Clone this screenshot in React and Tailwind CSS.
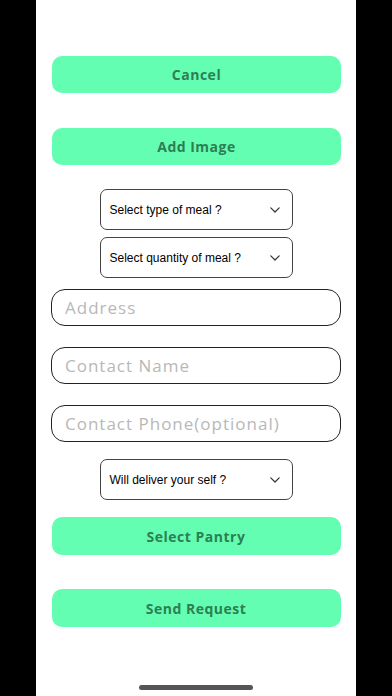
const Chevron = () => (
  <svg width="10" height="6" viewBox="0 0 10 6" fill="none">
    <path d="M0.8 0.8l4.2 4.2 4.2-4.2" stroke="#333" strokeWidth="1.2" strokeLinecap="round" strokeLinejoin="round" />
  </svg>
);

const GreenButton = ({ label, className }) => (
  <button
    className={`w-[289px] h-[37px] rounded-[10px] bg-[#64feb3] text-[#2d7f52] text-[14px] font-bold tracking-[0.5px] ${className}`}
    style={{ fontFamily: '"Open Sans", "DejaVu Sans", sans-serif' }}
  >
    {label}
  </button>
);

const SelectBox = ({ label, className }) => (
  <div
    className={`w-[193px] h-[41px] rounded-[7px] border border-[#444] flex items-center justify-between pl-[9px] pr-[12px] text-[12px] text-black ${className}`}
    style={{ fontFamily: '"Liberation Sans", Arial, sans-serif' }}
  >
    <span>{label}</span>
    <Chevron />
  </div>
);

const TextInput = ({ placeholder, className }) => (
  <input
    placeholder={placeholder}
    className={`w-[290px] h-[37px] rounded-[14px] border-[1.5px] border-[#222] px-[13px] text-[17px] tracking-[1px] placeholder:text-[#b8b8b8] outline-none ${className}`}
    style={{ fontFamily: '"Open Sans", sans-serif' }}
  />
);

export default function App() {
  return (
    <div className="min-h-[696px] bg-black flex justify-center">
      <div className="w-[320px] min-h-[696px] bg-white flex flex-col items-center pt-[56px] relative">
        <GreenButton label="Cancel" className="ml-[1px]" />
        <GreenButton label="Add Image" className="mt-[35px] ml-[1px]" />
        <SelectBox label="Select type of meal ?" className="mt-[24px]" />
        <SelectBox label="Select quantity of meal ?" className="mt-[7px]" />
        <TextInput placeholder="Address" className="mt-[11px]" />
        <TextInput placeholder="Contact Name" className="mt-[21px]" />
        <TextInput placeholder="Contact Phone(optional)" className="mt-[21px]" />
        <SelectBox label="Will deliver your self ?" className="mt-[17px]" />
        <GreenButton label="Select Pantry" className="mt-[17px] h-[38px]" />
        <GreenButton label="Send Request" className="mt-[34px] h-[38px]" />
        <div className="absolute bottom-[6px] left-1/2 -translate-x-1/2 w-[114px] h-[5px] rounded-full bg-[#555]" />
      </div>
    </div>
  );
}
